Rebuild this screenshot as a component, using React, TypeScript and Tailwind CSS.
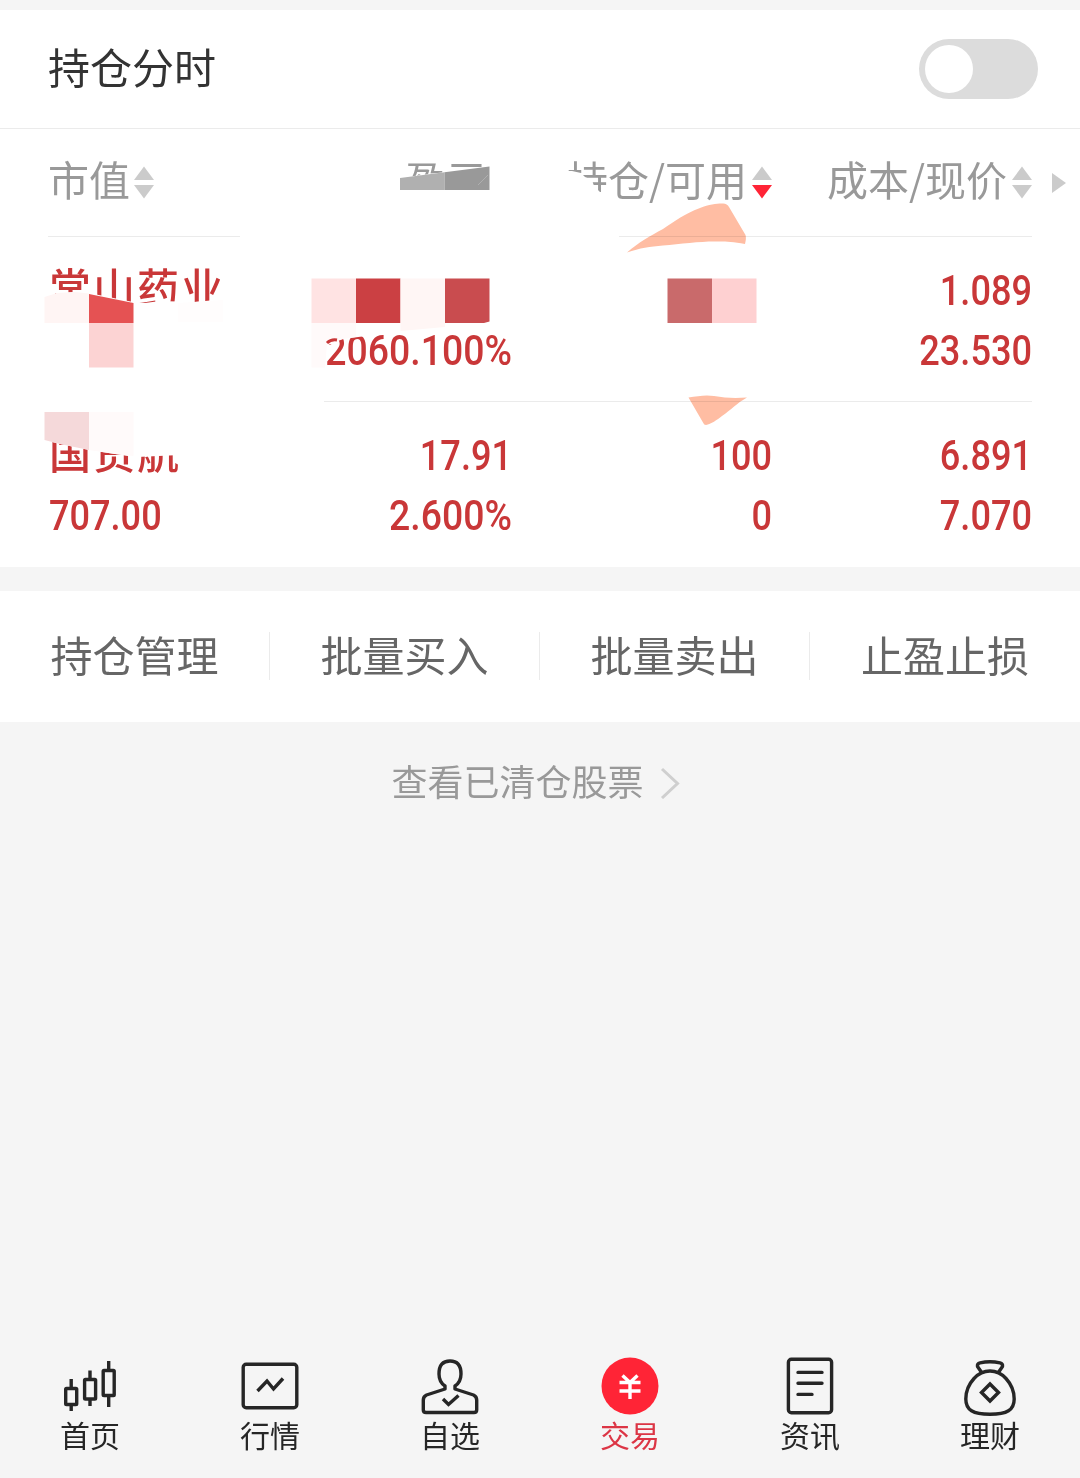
import React from "react";

type Dir = "up" | "down" | null;

function Sorter({ active = null }: { active?: Dir }) {
  return (
    <svg className="h-[33px] w-5 shrink-0" viewBox="0 0 20 33">
      <path d="M10 0.5L20 14H0Z" fill={active === "up" ? "#ff2436" : "#cbcbcb"} />
      <path d="M10 32.5L20 19H0Z" fill={active === "down" ? "#ff2436" : "#cbcbcb"} />
    </svg>
  );
}

function HeaderCell({ label, active, left = false }: { label: string; active?: Dir; left?: boolean }) {
  return (
    <div className={left ? "flex items-center gap-1" : "flex items-center justify-end gap-[5px]"}>
      <span className="pb-2.5 leading-[60px] whitespace-nowrap">{label}</span>
      <Sorter active={active} />
    </div>
  );
}

function numClass(value: string, left: boolean) {
  if (left) return "ml-px h-[60px] origin-left scale-x-[0.86]";
  if (value.endsWith("%")) return "h-[60px] origin-right scale-x-[0.89] text-right";
  return "h-[60px] origin-right scale-x-[0.86] text-right";
}

function Num({ value, left = false }: { value: string; left?: boolean }) {
  return (
    <div className={numClass(value, left)}>
      <span className="font-['Roboto',sans-serif] text-[42px] leading-[60px] font-medium">{value}</span>
    </div>
  );
}

type Holding = {
  name: string;
  value: string;
  profit: [string, string];
  amount: [string, string];
  price: [string, string];
};

const holdings: Holding[] = [
  { name: "常山药业", value: "", profit: ["", "2060.100%"], amount: ["", ""], price: ["1.089", "23.530"] },
  { name: "国货航", value: "707.00", profit: ["17.91", "2.600%"], amount: ["100", "0"], price: ["6.891", "7.070"] },
];

function HoldingRow({ item }: { item: Holding }) {
  return (
    <div className="ml-12 grid h-[165px] w-[984px] grid-cols-[204px_260px_260px_260px] border-t border-[#ebebeb] pt-6 leading-[60px] text-[#c93738]">
      <div>
        <div className="h-[60px] pl-px text-[42px] leading-[50px] font-medium tracking-[2px]">{item.name}</div>
        <Num value={item.value} left />
      </div>
      {[item.profit, item.amount, item.price].map((pair, i) => (
        <div key={i}>
          <Num value={pair[0]} />
          <Num value={pair[1]} />
        </div>
      ))}
    </div>
  );
}

/* Privacy mosaic brushed over parts of the table. */
function Mosaic() {
  return (
    <>
      <svg className="pointer-events-none absolute inset-0 h-full w-full" viewBox="0 129 1080 438">
        <g fill="#fff">
          <path d="M394 178.5L489 166.5L494 160H520V212H394Z" />
          <path d="M560 171L572 171L581 173L585 177L592 180L594 186L600 192H608.5V212H560Z" />
          <rect x="240" y="230" width="379" height="14" />
          <path d="M44 297L57 293L75 292L89 293L133 302L145 303L160 301L195 302L225 299V325H44Z" />
          <path d="M40 396H324V408H225V452L180 455L137 457L128 456L115 454L89 450L60 444L40 439Z" />
          <path d="M311 323H375L366 336L343 339L339 340L333 344L329 344L328 350H311Z" />
        </g>
        <path d="M400 178L444.500 172.300V190H400Z" fill="#b0b0b0" />
        <path d="M444.500 172.300L489.500 166.500V190H444.500Z" fill="#999" />
        <path d="M478 185L488 175" stroke="#b5b5b5" strokeWidth="0.800" />

        <path d="M44.500 297L57 293L75 292L89 293.500V323H44.500Z" fill="#fff5f4" />
        <path d="M89 294L133.500 303V323H89Z" fill="#e55253" />
        <rect x="89" y="323" width="44.500" height="44.500" fill="#fcd3d3" />
        <path d="M178 303L223 300V322H178Z" fill="#fffdfd" />

        <path d="M44.500 412H89V450L60 444L44.500 440Z" fill="#f5d9da" />
        <path d="M89 412H133.500V456L115 454L89 450Z" fill="#fffafa" />

        <path d="M311.500 323H356V337L343 339L333 343L327 344L325 367.500H311.500Z" fill="#fffafa" />
        <path d="M327 343Q331 339 337 340" fill="none" stroke="#c93738" strokeWidth="3" />
        <rect x="311.500" y="278.500" width="44.500" height="44.500" fill="#ffe3e3" />
        <rect x="356" y="278.500" width="44.500" height="44.500" fill="#cb4043" />
        <path d="M400.500 278.500H445V327L400.500 331Z" fill="#fff6f5" />
        <path d="M445 278.500H489.500V321.500L484 323H445Z" fill="#c94c4f" />

        <rect x="667.500" y="278.500" width="44.500" height="44.500" fill="#c96a6b" />
        <rect x="712" y="278.500" width="44.500" height="44.500" fill="#fed0d1" />
      </svg>
      <svg
        className="pointer-events-none absolute inset-0 h-full w-full mix-blend-multiply"
        viewBox="0 129 1080 438"
        fill="#ffbda3"
      >
        <path d="M627 252.500C639 242 650 236 663 229C675 221 684 214 700 208C709 204.500 716 203.500 722 203.500Q727 203 729 207L745.500 235Q746.500 238 745 244C730 241 722 241.500 714 241.500C700 241.500 680 244 663 245.500C650 246.500 640 248 627 252.500Z" />
        <path d="M688.500 397.500C698 396 706 394.500 714 396C725 398 735 398.500 747 397.500C737 403 731 410 722 416C717 420 711 424 706 425Q704 425 703 422.500Z" />
      </svg>
    </>
  );
}

const stroke = { fill: "none", stroke: "#262626", strokeWidth: 3.4 };

const tabs: { label: string; active?: boolean; icon: React.ReactNode }[] = [
  {
    label: "首页",
    icon: (
      <g {...stroke}>
        <rect x="5.700" y="28.500" width="11" height="16" rx="0.800" />
        <rect x="24.600" y="19.500" width="11" height="19.500" rx="0.800" />
        <rect x="43.200" y="10.500" width="11" height="25" rx="0.800" />
        <path d="M11.200 19V28M11.200 45V51M30 10.500V19M30 39V46M48.700 1V10M48.700 36V47" />
      </g>
    ),
  },
  {
    label: "行情",
    icon: (
      <g {...stroke}>
        <rect x="3.200" y="4.200" width="53.600" height="43.600" rx="3" />
        <path d="M17.500 31L27 21L33.500 29L43 18.500" />
      </g>
    ),
  },
  {
    label: "自选",
    icon: (
      <g {...stroke} strokeLinejoin="round">
        <path d="M25 29V26Q19 22 19 14C19 5 23 1 30 1C37 1 41 5 41 14Q41 22 35 26V29L53.500 35Q56.700 36.500 56.700 40V50Q56.700 52.500 54 52.500H6Q3.300 52.500 3.300 50V40Q3.300 36.500 6.500 35Z" />
        <path d="M23 39L28.500 44.500L38.500 35.500" strokeLinejoin="miter" />
      </g>
    ),
  },
  {
    label: "交易",
    active: true,
    icon: (
      <g>
        <circle cx="30" cy="26" r="28.500" fill="#ff2436" />
        <path d="M22.500 15.500L30 22.500L37.500 15.500M19.500 22.500H40.500M19.500 31H40.500M30 22V39" fill="none" stroke="#fff" strokeWidth="3.400" />
      </g>
    ),
  },
  {
    label: "资讯",
    icon: (
      <g {...stroke}>
        <rect x="8.400" y="-0.800" width="43.200" height="53.500" rx="3" />
        <path d="M18 12.400H42M18 23.300H42M18 34.400H32" strokeLinecap="round" />
      </g>
    ),
  },
  {
    label: "理财",
    icon: (
      <g {...stroke} strokeLinejoin="round">
        <path d="M22 13L17.500 6.500Q17 3.500 20 2.800Q30 0.800 40 2.800Q43 3.500 42.500 6.500L38 13" />
        <path d="M30 11C36 11 41 13 46 18.500C51 24 54.200 31 54.200 39C54.200 50 47 54.300 30 54.300C13 54.300 5.800 50 5.800 39C5.800 31 9 24 14 18.500C19 13 24 11 30 11Z" />
        <path d="M30 24L38.500 32.500L30 41L21.500 32.500Z" strokeLinejoin="miter" />
      </g>
    ),
  },
];

export default function App() {
  return (
    <div className="flex h-[1478px] w-[1080px] flex-col overflow-hidden bg-[#f5f5f5] pt-2.5 font-['Noto_Sans_CJK_SC',sans-serif]">
      <div className="flex h-[119px] shrink-0 items-center justify-between border-b border-[#ebebeb] bg-white pr-[42px] pl-12">
        <span className="pb-1.5 text-[42px] leading-[60px] text-[#333]">持仓分时</span>
        <button className="flex h-[60px] w-[119px] items-center rounded-full bg-[#dcdcdc] p-1.5" aria-label="持仓分时">
          <span className="size-12 rounded-full bg-white" />
        </button>
      </div>

      <section className="relative h-[438px] shrink-0 bg-white">
        <div className="flex h-[107px] items-center pl-12 text-[41px] text-[#999]">
          <div className="grid w-[984px] grid-cols-[204px_260px_260px_260px]">
            <HeaderCell label="市值" left />
            <HeaderCell label="盈亏" />
            <HeaderCell label="持仓/可用" active="down" />
            <HeaderCell label="成本/现价" />
          </div>
          <svg className="ml-5 h-5 w-3.5" viewBox="0 0 14 20">
            <path d="M0 0L14 10L0 20Z" fill="#cbcbcb" />
          </svg>
        </div>
        {holdings.map((item) => (
          <HoldingRow key={item.name} item={item} />
        ))}
        <Mosaic />
      </section>

      <div className="mt-6 grid h-[131px] shrink-0 grid-cols-4 items-center bg-white pb-0.5 text-[42px] leading-[60px] text-[#666]">
        {["持仓管理", "批量买入", "批量卖出", "止盈止损"].map((label, i) => (
          <div
            key={label}
            className={
              i < 3
                ? "flex h-12 items-center justify-center border-r border-[#ebebeb]"
                : "flex h-12 items-center justify-center"
            }
          >
            <span className="pb-1">{label}</span>
          </div>
        ))}
      </div>

      <div className="flex h-[120px] shrink-0 items-center justify-center gap-4 pr-2 text-[36px] leading-[54px] text-[#999]">
        <span className="pb-[5px]">查看已清仓股票</span>
        <svg className="mt-0.5 mr-px h-8 w-5" viewBox="0 0 20 32">
          <path d="M2 2L17.500 16.500L2 31" fill="none" stroke="#cfcfcf" strokeWidth="3" />
        </svg>
      </div>

      <nav className="mt-auto grid h-[118px] shrink-0 grid-cols-6">
        {tabs.map((tab) => (
          <div key={tab.label} className="flex flex-col items-center">
            <svg className="h-14 w-[60px] overflow-visible" viewBox="0 0 60 56">
              {tab.icon}
            </svg>
            <span
              className={
                tab.active
                  ? "text-[30px] leading-9 text-[#dc3545]"
                  : "text-[30px] leading-9 text-[#262626]"
              }
            >
              {tab.label}
            </span>
          </div>
        ))}
      </nav>
    </div>
  );
}
